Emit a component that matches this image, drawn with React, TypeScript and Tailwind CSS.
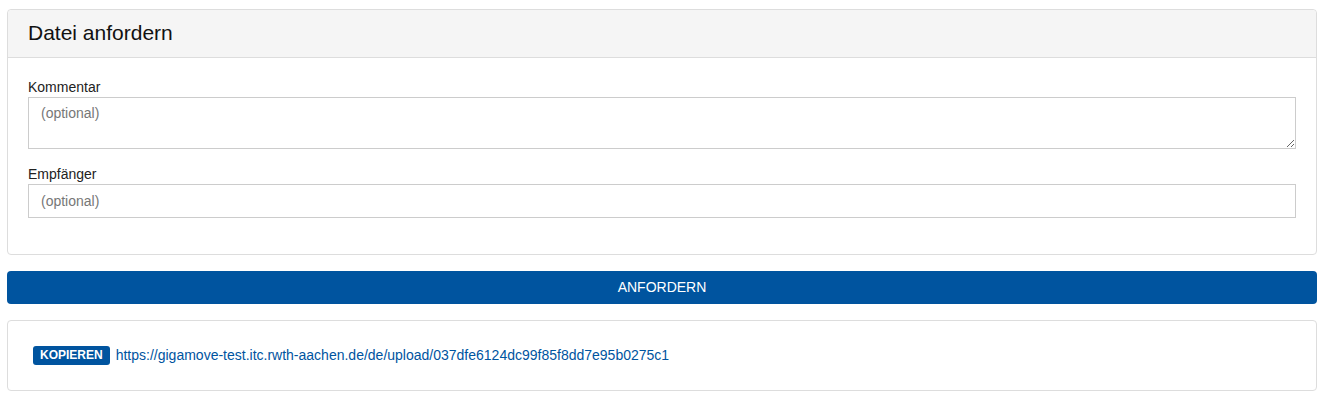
import React from 'react';

export default function App() {
  const link = 'https://gigamove-test.itc.rwth-aachen.de/de/upload/037dfe6124dc99f85f8dd7e95b0275c1';

  return (
    <div className="min-h-screen bg-white pl-[7px] pr-[10px] pt-[9px] text-[14px] text-[#222] [font-family:'Liberation_Sans',Arial,sans-serif]">
      <div className="rounded-[4px] border border-[#dddddd] bg-white">
        <div className="h-[48px] rounded-t-[4px] border-b border-[#dddddd] bg-[#f5f5f5] px-[20px] pt-[11px]">
          <h2 className="text-[21px] leading-[24px] text-[#111]">Datei anfordern</h2>
        </div>
        <div className="px-[20px] pb-[36px] pt-[21px]">
          <label className="block leading-[17px] mb-[1px]">Kommentar</label>
          <textarea
            placeholder="(optional)"
            className="block h-[52px] w-full resize-y border border-[#cccccc] px-[12px] pt-[5px] leading-[20px] placeholder:text-[#777] focus:outline-none"
          />
          <label className="mt-[17px] block leading-[17px] mb-[1px]">Empfänger</label>
          <input
            placeholder="(optional)"
            className="block h-[34px] w-full border border-[#cccccc] px-[12px] placeholder:text-[#777] focus:outline-none"
          />
        </div>
      </div>

      <button className="mt-[16px] block h-[33px] w-full rounded-[4px] bg-[#00549f] text-[14px] text-white">
        ANFORDERN
      </button>

      <div className="mt-[16px] flex h-[71px] items-center rounded-[4px] border border-[#dddddd] px-[25px]">
        <span className="rounded-[3px] bg-[#00549f] px-[7px] py-[2px] text-[12px] font-bold leading-[15px] text-white">
          KOPIEREN
        </span>
        <a href="#" className="ml-[6px] text-[#00549f]">
          {link}
        </a>
      </div>
    </div>
  );
}
